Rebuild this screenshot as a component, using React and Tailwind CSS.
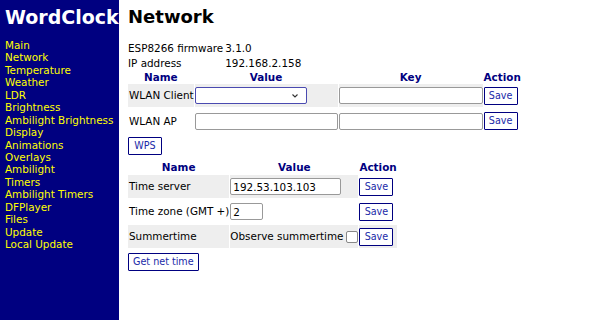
const LINKS = [
  'Main', 'Network', 'Temperature', 'Weather', 'LDR', 'Brightness', 'Ambilight Brightness',
  'Display', 'Animations', 'Overlays', 'Ambilight', 'Timers', 'Ambilight Timers',
  'DFPlayer', 'Files', 'Update', 'Local Update',
]

function SaveBtn({ label = 'Save' }) {
  return (
    <button className="h-[18px] min-w-[34px] px-[4px] border border-[#000080] bg-white text-[#1a2aa8] text-[9.6px] leading-none rounded-[1px]">
      {label}
    </button>
  )
}

function TextInput({ w, value = '' }) {
  return (
    <input
      readOnly
      value={value}
      className={`${w} h-[17px] px-[2px] border border-[#999] rounded-[2px] bg-white text-[10.4px] text-black outline-none`}
    />
  )
}

export default function App() {
  return (
    <div className="flex w-[612px] h-[320px] bg-white text-black text-[10.4px] leading-[12.4px]" style={{ fontFamily: '"DejaVu Sans", Verdana, sans-serif' }}>
      <nav className="w-[119px] shrink-0 bg-[#000080] px-[5px] pt-[5px]">
        <h1 className="text-white font-bold text-[19px] leading-[24px] mb-[10px]">WordClock</h1>
        <ul>
          {LINKS.map((l) => (
            <li key={l} className="text-[#ffff00] text-[10.4px] leading-[12.44px] whitespace-nowrap">{l}</li>
          ))}
        </ul>
      </nav>

      <main className="flex-1 pl-[9px] pt-[5px]">
        <h2 className="font-bold text-[18px] leading-[24px] mb-[12px]">Network</h2>

        <table className="border-collapse mb-[1px]">
          <tbody>
            <tr className="h-[15px]">
              <td className="pr-[2px]">ESP8266 firmware</td>
              <td>3.1.0</td>
            </tr>
            <tr className="h-[15px]">
              <td>IP address</td>
              <td>192.168.2.158</td>
            </tr>
          </tbody>
        </table>

        <table className="border-separate border-spacing-x-[1px] border-spacing-y-[2px] -ml-[1px] -mt-[2px]">
          <thead>
            <tr className="text-[#000080] font-bold h-[10px]">
              <th className="leading-[10px]">Name</th>
              <th className="leading-[10px]">Value</th>
              <th className="leading-[10px]">Key</th>
              <th className="leading-[10px]">Action</th>
            </tr>
          </thead>
          <tbody>
            <tr className="h-[23px] bg-[#eeeeee]">
              <td className="pl-[1px] whitespace-nowrap">WLAN Client</td>
              <td className="align-middle">
                <div className="relative w-[112px] h-[17px] border border-[#4a4ab0] bg-white rounded-[2px]">
                  <svg className="absolute right-[8px] top-[6px]" width="6" height="4" viewBox="0 0 6 4">
                    <path d="M0.5 0.5 L3 3 L5.5 0.5" fill="none" stroke="#333" strokeWidth="1.1" />
                  </svg>
                </div>
              </td>
              <td><TextInput w="w-[144px]" /></td>
              <td className="bg-white"><SaveBtn /></td>
            </tr>
            <tr className="h-[24px]">
              <td className="pl-[1px]">WLAN AP</td>
              <td><TextInput w="w-[143px]" /></td>
              <td><TextInput w="w-[144px]" /></td>
              <td><SaveBtn /></td>
            </tr>
          </tbody>
        </table>

        <div className="mt-[2px] mb-[6px]">
          <SaveBtn label="WPS" />
        </div>

        <table className="border-separate border-spacing-x-[1px] border-spacing-y-[2px] -ml-[1px] -mt-[2px]">
          <thead>
            <tr className="text-[#000080] font-bold h-[12px]">
              <th className="leading-[10px]">Name</th>
              <th className="leading-[10px]">Value</th>
              <th className="leading-[10px]">Action</th>
            </tr>
          </thead>
          <tbody>
            <tr className="h-[23px] bg-[#eeeeee]">
              <td className="pl-[1px]">Time server</td>
              <td><TextInput w="w-[111px]" value="192.53.103.103" /></td>
              <td className="bg-white"><SaveBtn /></td>
            </tr>
            <tr className="h-[23px]">
              <td className="pl-[1px] whitespace-nowrap">Time zone (GMT +)</td>
              <td><TextInput w="w-[33px]" value="2" /></td>
              <td><SaveBtn /></td>
            </tr>
            <tr className="h-[23px] bg-[#eeeeee]">
              <td className="pl-[1px]">Summertime</td>
              <td className="whitespace-nowrap">
                <span className="inline-flex items-center gap-[3px]">
                  Observe summertime
                  <span className="inline-block w-[12px] h-[12px] border border-[#888] bg-white rounded-[2px]" />
                </span>
              </td>
              <td><SaveBtn /></td>
            </tr>
          </tbody>
        </table>

        <div className="mt-[3px]">
          <SaveBtn label="Get net time" />
        </div>
      </main>
    </div>
  )
}
